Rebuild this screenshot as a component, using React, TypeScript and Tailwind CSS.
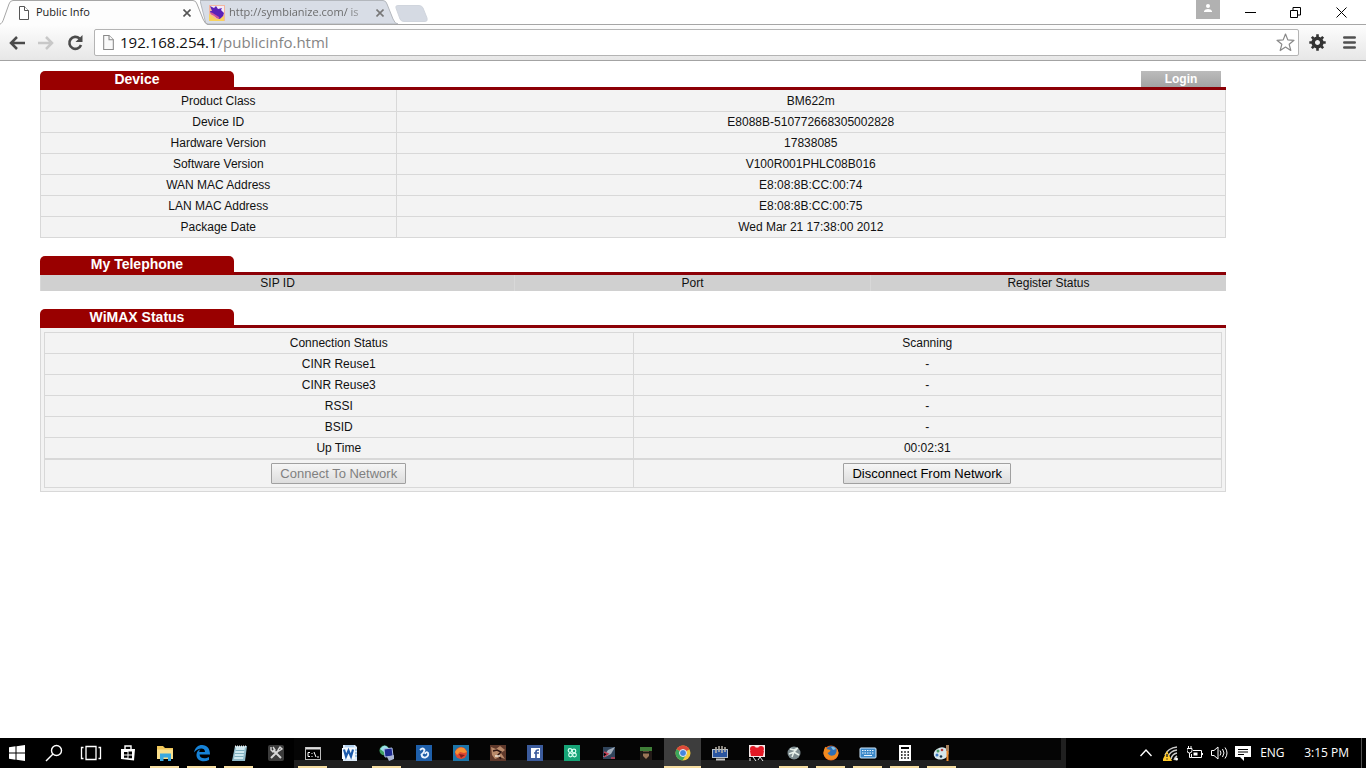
import type { ReactNode } from "react";

const uiFont = "font-['Open_Sans','Noto_Sans',sans-serif]";
const pageFont = "font-['Liberation_Sans',Arial,sans-serif]";

function PageIcon({ className, fill = "#fff", stroke = "#555" }: { className: string; fill?: string; stroke?: string }) {
  return (
    <svg className={className} viewBox="0 0 12 14" fill={fill} stroke={stroke} aria-hidden="true">
      <path d="M1.5.5h5l4 4v9h-9z" />
      <path d="M6.5.5v4h4" />
    </svg>
  );
}

function CloseIcon({ color }: { color: string }) {
  return (
    <svg className="h-2 w-2" viewBox="0 0 8 8" stroke={color} strokeWidth="1.6" aria-hidden="true">
      <path d="M.5.5l7 7M7.5.5l-7 7" />
    </svg>
  );
}

function TabStrip() {
  return (
    <header className="flex h-[25px] items-start justify-between border-b border-[#a6a6a6] bg-white">
      <div className={`flex ${uiFont} text-[11px]`} role="tablist" aria-label="Browser tabs">
        <div className="relative z-10 flex h-[25px] w-[200px] items-center pl-[18px]">
          <svg className="absolute top-0 left-0 h-[25px] w-[208px]" viewBox="0 0 208 25" aria-hidden="true">
            <path d="M-2 25C2 24 3 21 4 18L9 4Q10 .5 13 .5H193Q196 .5 197 4L203 19Q205 24 208 25Z" fill="#fdfdfd" />
            <path d="M-1 24.5C2 24 3 21 4 18L9 4Q10 .5 13 .5H193Q196 .5 197 4L203 19Q205 24 208 24.5" fill="none" stroke="#a6a6a6" />
          </svg>
          <PageIcon className="relative h-[14px] w-3" />
          <button role="tab" aria-selected="true" className="relative ml-[6px] w-[140px] text-left text-[#222]">Public Info</button>
          <button aria-label="Close Public Info" className="relative ml-[7px]"><CloseIcon color="#555" /></button>
        </div>
        <div className="relative flex h-[25px] w-[194px] items-center pl-[9px]">
          <svg className="absolute top-0 left-0 h-[24px] w-[198px]" viewBox="0 0 198 24" aria-hidden="true">
            <path d="M0 .5H183Q186 .5 187 4L193 19Q195 24 198 24H6Z" fill="#d8dde6" stroke="#b3b7bd" />
          </svg>
          <svg className="relative h-4 w-4" viewBox="0 0 16 16" aria-hidden="true">
            <rect width="16" height="16" fill="#f3b6a0" />
            <path d="M1 1h14v9l-3-4-3 1-5-3z" fill="#f3eaf6" />
            <path d="M1 1l4 2 2-2 2 3 4-1-1 2 3 3-1 3-3 3-3-1-3-3-3-1-1-3 2 0z" fill="#5a22b8" />
            <path d="M0 9l3 2 4 3 4 0 4-3v5H0z" fill="#f8d25e" />
            <path d="M2 8l8 5" stroke="#d2559a" strokeWidth="1.500" />
          </svg>
          <button role="tab" aria-selected="false" className="relative ml-1 w-[147px] bg-linear-to-r from-[#666] from-80% to-[#c7cbd1] to-95% bg-clip-text text-left whitespace-nowrap text-transparent">http://symbianize.com/ is</button>
          <button aria-label="Close symbianize.com" className="relative"><CloseIcon color="#777" /></button>
        </div>
        <button aria-label="New tab" className="mt-[5px] h-[17px] w-[34px]">
          <svg className="h-[17px] w-[34px]" viewBox="0 0 34 17" aria-hidden="true">
            <path d="M4 .5H25Q28 .5 29 3L33 13Q34 16.500 31 16.500H10Q7 16.500 6 14L2 3Q1 .5 4 .5Z" fill="#d5dae3" stroke="#d0d5dd" />
          </svg>
        </button>
      </div>
      <div className="flex h-6">
        <button aria-label="Profile" className="mr-[7px] flex h-[19px] w-6 justify-center bg-[#b1b1b1] pt-1">
          <svg className="h-2 w-2" viewBox="0 0 8 8" fill="#fff" aria-hidden="true">
            <circle cx="4" cy="2" r="2" />
            <path d="M0 8V7Q1 5 4 5T8 7V8Z" />
          </svg>
        </button>
        <button aria-label="Minimize" className="flex w-[46px] items-center justify-center">
          <svg className="h-[11px] w-[11px]" viewBox="0 0 11 11" stroke="#000"><path d="M0 5.500h11" /></svg>
        </button>
        <button aria-label="Restore" className="flex w-[45px] items-center justify-center">
          <svg className="h-[11px] w-[11px]" viewBox="0 0 11 11" stroke="#000" fill="none"><path d="M.5 3.500h7v7h-7zM3 3V.5h7.500V8H8" /></svg>
        </button>
        <button aria-label="Close window" className="mr-[2px] flex w-[46px] items-center justify-center">
          <svg className="h-[11px] w-[11px]" viewBox="0 0 11 11" stroke="#000"><path d="M.5.5l10 10M10.500.5l-10 10" /></svg>
        </button>
      </div>
    </header>
  );
}

function Toolbar() {
  return (
    <div className="flex h-9 items-center border-b border-[#a3a3a3] bg-linear-to-b from-[#fdfdfd] to-[#e7e7e7] pl-[9px]">
      <button aria-label="Back">
        <svg className="h-4 w-4" viewBox="0 0 16 16" fill="none" stroke="#4b4b4b" strokeWidth="2.500"><path d="M2 8h14M8 2L2 8l6 6" /></svg>
      </button>
      <button aria-label="Forward" disabled className="ml-[13px]">
        <svg className="h-4 w-4" viewBox="0 0 16 16" fill="none" stroke="#c8c8c8" strokeWidth="2.500"><path d="M0 8h14M8 2l6 6-6 6" /></svg>
      </button>
      <button aria-label="Reload" className="ml-[13px]">
        <svg className="h-4 w-4" viewBox="0 0 16 16" fill="none" aria-hidden="true">
          <path d="M12.500 3.500A6 6 0 1 0 14 10" stroke="#4b4b4b" strokeWidth="2.600" />
          <path d="M15.500 0v7H8.500z" fill="#4b4b4b" />
        </svg>
      </button>
      <form className="relative ml-[11px] flex h-[27px] min-w-0 flex-1 items-center rounded-[2px] border border-[#b4b4b4] bg-white pl-[7px]" onSubmit={(e) => e.preventDefault()}>
        <PageIcon className="h-[15px] w-[13px] shrink-0" fill="#fafafa" stroke="#8a8a8a" />
        <div className={`relative ml-[5px] min-w-0 flex-1 pb-[2px] text-[15px] leading-5 ${uiFont}`}>
          <div aria-hidden="true" className="text-[#858585]"><span className="text-[#111]">192.168.254.1</span>/publicinfo.html</div>
          <input aria-label="Address" defaultValue="192.168.254.1/publicinfo.html" className="absolute inset-0 w-full bg-transparent text-transparent outline-none" />
        </div>
        <button aria-label="Bookmark this page" className="mr-[3px]">
          <svg className="h-[19px] w-[19px]" viewBox="0 0 19 19" fill="#fff" stroke="#888" strokeWidth="1.200" strokeLinejoin="round">
            <path d="M9.500 1l2.300 5.900 6.200.4-4.800 4 1.600 6.200-5.300-3.400-5.300 3.400 1.600-6.200-4.800-4 6.200-.4z" />
          </svg>
        </button>
      </form>
      <button aria-label="Extension settings" className="ml-[10px]">
        <svg className="h-[17px] w-[17px]" viewBox="-8.500 -8.500 17 17" aria-hidden="true">
          <circle r="4.300" fill="none" stroke="#333" strokeWidth="3.600" />
          <path d="M0-8.200V-5M0 8.200V5M-8.200 0H-5M8.200 0H5M-5.700-5.700L-4-4M5.700 5.700L4 4M-5.700 5.700L-4 4M5.700-5.700L4-4" stroke="#333" strokeWidth="2.600" />
        </svg>
      </button>
      <button aria-label="Menu" className="mr-[10px] ml-[17px]">
        <svg className="h-[13px] w-[13px]" viewBox="0 0 13 13" stroke="#505050" strokeWidth="2.600" strokeLinecap="round"><path d="M1.300 1.500h10.400M1.300 6.500h10.400M1.300 11.500h10.400" /></svg>
      </button>
    </div>
  );
}

function SectionTitle({ children, action }: { children: ReactNode; action?: ReactNode }) {
  return (
    <div className="flex h-[19px] items-start justify-between border-b-[3px] border-[#8c0006]">
      <h2 className="h-[19px] w-[194px] rounded-t-[5px] bg-[#990000] text-center text-[14px] leading-[17px] font-bold text-white">{children}</h2>
      {action}
    </div>
  );
}

const deviceRows = [
  ["Product Class", "BM622m"],
  ["Device ID", "E8088B-510772668305002828"],
  ["Hardware Version", "17838085"],
  ["Software Version", "V100R001PHLC08B016"],
  ["WAN MAC Address", "E8:08:8B:CC:00:74"],
  ["LAN MAC Address", "E8:08:8B:CC:00:75"],
  ["Package Date", "Wed Mar 21 17:38:00 2012"],
];

const wimaxRows = [
  ["Connection Status", "Scanning"],
  ["CINR Reuse1", "-"],
  ["CINR Reuse3", "-"],
  ["RSSI", "-"],
  ["BSID", "-"],
  ["Up Time", "00:02:31"],
];

const cell = "border border-[#d8d8d8] p-0 text-center font-normal";
const formButton = "h-[21px] rounded-[1px] border border-[#a0a0a0] bg-linear-to-b from-[#f6f6f6] to-[#dddddd] px-2 text-[13px] leading-[19px]";

function PublicInfo() {
  return (
    <main className={`flex-1 bg-white pt-[10px] pr-[140px] pl-10 text-[12px] leading-4 text-[#111] ${pageFont}`}>
      <section>
        <SectionTitle
          action={<button className="mr-[5px] h-4 w-20 bg-linear-to-b from-[#bcbcbc] to-[#a3a3a3] text-[12px] leading-4 font-bold text-white">Login</button>}
        >
          Device
        </SectionTitle>
        <table className="w-full table-fixed border-collapse bg-[#f3f3f3]">
          <colgroup><col className="w-[30%]" /><col /></colgroup>
          <tbody className="[&>tr:first-child>*]:pt-px">
            {deviceRows.map(([name, value]) => (
              <tr key={name}>
                <th scope="row" className={`h-[21px] border-t-0 ${cell}`}>{name}</th>
                <td className={`h-[21px] border-t-0 ${cell}`}>{value}</td>
              </tr>
            ))}
          </tbody>
        </table>
      </section>

      <section className="mt-[18px]">
        <SectionTitle>My Telephone</SectionTitle>
        <table className="w-full table-fixed border-collapse bg-[#d0d0d0]">
          <colgroup><col className="w-[40%]" /><col className="w-[30%]" /><col className="w-[30%]" /></colgroup>
          <thead>
            <tr>
              {["SIP ID", "Port", "Register Status"].map((name) => (
                <th key={name} scope="col" className="h-4 border-l border-[#d8d8d8] p-0 text-center font-normal">{name}</th>
              ))}
            </tr>
          </thead>
        </table>
      </section>

      <section className="mt-[18px]">
        <SectionTitle>WiMAX Status</SectionTitle>
        <div className="border border-t-0 border-[#d8d8d8] bg-[#f3f3f3] px-[3px] pt-1 pb-[3px]">
          <table className="w-full table-fixed border-collapse">
            <tbody className="[&>tr:nth-child(6)>*]:h-[22px] [&>tr:nth-child(6)>*]:pt-px">
              {wimaxRows.map(([name, value]) => (
                <tr key={name}>
                  <th scope="row" className={`h-[21px] ${cell}`}>{name}</th>
                  <td className={`h-[21px] ${cell}`}>{value}</td>
                </tr>
              ))}
              <tr>
                <td className="h-7 border border-t-2 border-[#d8d8d8] p-0 text-center">
                  <button disabled className={`${formButton} text-[#808080]`}>Connect To Network</button>
                </td>
                <td className="h-7 border border-t-2 border-[#d8d8d8] p-0 text-center">
                  <button className={`${formButton} text-black`}>Disconnect From Network</button>
                </td>
              </tr>
            </tbody>
          </table>
        </div>
      </section>
    </main>
  );
}

type TaskApp = { name: string; open?: boolean; active?: boolean; art: ReactNode };

const systemApps: TaskApp[] = [
  { name: "Start", art: <path d="M0 2.300L6.500 1.300V7.500H0zM7.500 1.200L16 0v7.500H7.500zM0 8.500h6.500v6.200L0 13.700zM7.500 8.500H16V16l-8.500-1.200z" fill="#fff" /> },
  { name: "Search", art: <g fill="none" stroke="#fff" strokeWidth="1.400"><circle cx="10.500" cy="5.500" r="5" /><path d="M7 9l-7 7" /></g> },
  { name: "Task View", art: <g fill="none" stroke="#fff" strokeWidth="1.300"><path d="M3 1.500h10v13H3zM.5 2.500H-1.500v11H.5M15.500 2.500H17.500v11H15.500" /></g> },
  { name: "Store", art: <g><path d="M1 4h14l-1 11.500L1 14z" fill="#fff" /><path d="M5 4V1h6v3" fill="none" stroke="#fff" strokeWidth="1.400" /><path d="M4 7h3.500v2.500H4zM8.500 6.500h3.500v3H8.500zM4 10.500h3.500v2.300H4zM8.500 10.500h3.500v2.800H8.500z" fill="#000" /></g> },
  { name: "File Explorer", open: true, art: <g><path d="M0 1h6l2 2h8v11H0z" fill="#f0c75a" /><path d="M0 4.500h16V14H0z" fill="#fbe08c" /><path d="M3 16V8.500h11V16h-3v-3.500H6.500V16z" fill="#3ba9df" /></g> },
  { name: "Edge", open: true, art: <path d="M0 7.500C1 2.500 4 0 8.200 0 13 0 16 3.500 16 9.500H5.500c.3 4.500 6 4.500 9.500 2.500v3C9 18 2 15.500 2.500 9.500 2.700 6.500 4.500 5 6.500 4.200 5.500 5 5.300 6 5.300 7H11c0-5-7-4.500-11 .5z" fill="#1683d8" /> },
  { name: "Notepad", open: true, art: <g><path d="M4 1h12l-2 15H1z" fill="#8fb9c8" /><path d="M3 14l2-12h9l-2 12z" fill="#cfe9f0" /><path d="M4.500 5.500h9M4 8.500h9M3.500 11.500h9" stroke="#7fb0c0" /><path d="M4 1.500h11" stroke="#eee" strokeWidth="2" strokeDasharray="1 1" /></g> },
  { name: "Tools", art: <g><rect width="16" height="16" rx="2" fill="#3b3b3b" /><path d="M3 13l8-8M5 5l8 8" stroke="#d7d7d7" strokeWidth="2" /><path d="M3 2v3l2 2 2-2-2-3M10 5l2-3 2 2-3 2" fill="none" stroke="#d7d7d7" strokeWidth="1.400" /></g> },
];

const pinnedApps: TaskApp[] = [
  { name: "Command Prompt", open: true, art: <g><rect x=".5" y="2.500" width="15" height="12" fill="#000" stroke="#bbb" /><path d="M1 3.500h14" stroke="#ddd" strokeWidth="2" /><path d="M5 7.500H3v4h2M7 8v1M7 11v1M9 7l2 5M12 12h2" stroke="#fff" fill="none" /></g> },
  { name: "Word", art: <g><path d="M1 0h12l2 2v14H1z" fill="#dcebfa" /><path d="M3 1h9" stroke="#86b6e4" /><path d="M0 3h13v11H0z" fill="#f6fbff" /><path d="M2 4.500l2 7 2.500-6 2.500 6 2-7" stroke="#1d5bac" strokeWidth="2.200" fill="none" /><path d="M13 5h2M13 8h2M13 11h2" stroke="#639bd1" /></g> },
  { name: "Network", open: true, art: <g><circle cx="5.500" cy="5.500" r="5" fill="#3f9f62" /><path d="M1 4q5-7 9 0L5 7z" fill="#9be0ea" /><path d="M5 4l8-1 1 8-8 1z" fill="#1f2c92" stroke="#aebfe6" /><path d="M8 12l7-2v4l-5 2z" fill="#a9b4d2" /></g> },
  { name: "UC Browser", art: <g><rect width="16" height="16" fill="#1e5faa" /><path d="M4 5Q7 2 8.500 5 8 8 5.500 9.500 6 13 9.500 12.500 13 11 12 8 10 6 9 9" fill="none" stroke="#e8f2ff" strokeWidth="1.800" /></g> },
  { name: "Firebird", art: <g><rect width="16" height="16" fill="#1d75a9" /><circle cx="8" cy="8" r="6" fill="#df4932" /><path d="M2 7q3-6 9-4l3 4-3 1-4-1-3 3z" fill="#f79132" /><path d="M6 9l6 1-4 3z" fill="#871d1d" /></g> },
  { name: "Clash", art: <g><rect width="16" height="16" fill="#60392b" /><path d="M1 2l5 2 4-3 5 4-4 3 4 6-5-2-5 2-3-4z" fill="#b98a6b" /><path d="M3 6l4-1 4 2-3 3 3 4" fill="none" stroke="#2d1511" strokeWidth="1.500" /><path d="M5 11h5" stroke="#f2e4d4" strokeWidth="1.500" /></g> },
  { name: "Facebook", art: <g><rect width="16" height="16" fill="#3b5b9c" /><path d="M4 3h9v10H4z" fill="#fff" /><path d="M12 5h-1q-2 0-2 2v6M7 8h5" stroke="#3b5b9c" strokeWidth="1.700" fill="none" /></g> },
  { name: "Green Browser", art: <g><rect width="16" height="16" fill="#16a477" /><g fill="none" stroke="#d8fff1" strokeWidth="1.200"><circle cx="6" cy="5.500" r="1.800" /><circle cx="10" cy="6" r="1.800" /><circle cx="6.500" cy="10" r="1.800" /><circle cx="10.500" cy="10" r="1.800" /></g></g> },
  { name: "Jet Game", art: <g><rect x="2" y="2" width="12" height="12" fill="#30445b" /><path d="M2 12l5-7 7-3-4 7-6 3z" fill="#a3afbc" /><path d="M3 7l4 2-4 3M10 13h4" stroke="#bf4055" strokeWidth="1.500" /></g> },
  { name: "Soldier Game", art: <g><rect x="2" y="2" width="12" height="13" fill="#231b18" /><path d="M2 2h12v4H2z" fill="#3f7f38" /><path d="M5 6h6v5l-3 3-3-3z" fill="#9c7557" /><path d="M4 7.500h8" stroke="#1b1814" strokeWidth="2" /></g> },
  { name: "Chrome", open: true, active: true, art: <g><circle cx="8" cy="8" r="7.500" fill="#f1c83a" /><path d="M8 8L1.500 4.300A7.500 7.500 0 0 1 14.500 4.300z" fill="#db493a" /><path d="M8 8L1.500 4.300A7.500 7.500 0 0 0 7.500 15.500L11.500 9z" fill="#3ca65b" /><circle cx="8" cy="8" r="3.500" fill="#4385dd" stroke="#eee" /></g> },
  { name: "Monitor Tool", art: <g><rect x=".5" y="4.500" width="15" height="8" fill="#2a55a0" stroke="#b6c1cc" /><path d="M4 14.500h9" stroke="#c2c2c2" strokeWidth="2" /><path d="M4 8V2M7 7V1M10 8V1M13 7V2" stroke="#bab5aa" strokeWidth="1.500" /></g> },
  { name: "Red Network", art: <g><path d="M0 0h16v12H0z" fill="#f7e9e9" /><g fill="#e31925"><circle cx="4" cy="4" r="3" /><circle cx="12" cy="4" r="3" /><circle cx="8" cy="6" r="3.500" /><path d="M1 6h14l-1 5H2z" /></g><path d="M1 13v3M4 12l3 4M9 15l2-3 3 4" stroke="#eee" fill="none" /></g> },
  { name: "Globe", open: true, art: <g><circle cx="8" cy="8" r="6.500" fill="#7d8c90" /><path d="M4 4l4 1 4-2M3 9l5-2 5 3M6 12l2-5 3-3" stroke="#e8f1eb" strokeWidth="1.500" fill="none" /></g> },
  { name: "Firefox", open: true, art: <g><circle cx="8" cy="8" r="7.500" fill="#e0601c" /><circle cx="8.500" cy="6.500" r="5.500" fill="#2f6fb4" /><path d="M8 2q3-1 5 2l-3 1z" fill="#7fc0e6" /><path d="M1 5q1-4 2.500-3l0 2 4 1-1 2-2 1q2 4 7 2 3-3 2-7 4 5 0 9.500-4 3.500-9 1.500Q-1 11 1 5z" fill="#f08a20" /></g> },
  { name: "On-Screen Keyboard", open: true, art: <g><rect y="3" width="16" height="10" rx="1" fill="#3c89c9" stroke="#d1eaff" /><path d="M2 5.500h12M2 8h12" stroke="#e9f5ff" strokeDasharray="1.500 1" /><path d="M4 10.500h8" stroke="#e9f5ff" /></g> },
  { name: "Calculator", open: true, art: <g><path d="M2 0h12v16H2z" fill="#fff" /><path d="M4 2h8v2H4z" /><path d="M4 7h8M4 10h8M4 13h8" stroke="#000" strokeWidth="1.600" strokeDasharray="1.600 1.600" /></g> },
  { name: "Paint", open: true, art: <g><ellipse cx="7" cy="8.500" rx="7.500" ry="6" fill="#d6e6eb" transform="rotate(-15 7 8)" /><circle cx="4" cy="6" r="1.500" fill="#4a9b66" /><circle cx="8" cy="5" r="1.300" fill="#b83939" /><circle cx="3" cy="10" r="1.500" fill="#3b79c5" /><circle cx="7" cy="11.500" r="1.300" fill="#1c3548" /><path d="M13.500 0v6" stroke="#a9825c" strokeWidth="3" /><path d="M13.500 6v10" stroke="#ee8a2c" strokeWidth="2" /></g> },
];

function TaskButton({ app }: { app: TaskApp }) {
  return (
    <button aria-label={app.name} title={app.name} className={`relative flex h-full w-[37px] items-center justify-center ${app.active ? "bg-[#3d3d3d]" : ""}`}>
      <svg className="h-4 w-4 overflow-visible" viewBox="0 0 16 16">{app.art}</svg>
      {app.open && <span className={`absolute bottom-0 h-[2px] bg-[#f6dda0] ${app.active ? "inset-x-0" : "inset-x-1"}`} />}
    </button>
  );
}

function Taskbar() {
  return (
    <footer className={`flex h-[30px] justify-between bg-black text-white ${uiFont}`}>
      <nav aria-label="Taskbar" className="-ml-[2px] flex">
        <div className="flex">{systemApps.map((app) => <TaskButton key={app.name} app={app} />)}</div>
        <div className="flex w-[772px] bg-[#050505] shadow-[inset_-5px_-8px_0_#202020]">{pinnedApps.map((app) => <TaskButton key={app.name} app={app} />)}</div>
      </nav>
      <div className="flex items-center text-[12px]">
        <button aria-label="Show hidden icons" className="mr-[11px]">
          <svg className="h-3 w-3" viewBox="0 0 12 12" fill="none" stroke="#fff" strokeWidth="1.400"><path d="M.5 9L6 3l5.500 6" /></svg>
        </button>
        <button aria-label="Network" className="mr-2">
          <svg className="h-4 w-4" viewBox="0 0 16 16" fill="none" stroke="#ccc">
            <path d="M2 10Q5 3 14 2M5 12q2-6 9-7M8 14q1-5 6-6M11 15q1-3 3-4" strokeWidth="1.400" />
            <circle cx="13.500" cy="14" r="1.500" fill="#fff" stroke="none" />
            <path d="M4 6l5 10H-1z" fill="#ffc928" stroke="none" /><path d="M4 9v3M4 13.500v1" stroke="#222" strokeWidth="1.400" />
          </svg>
        </button>
        <button aria-label="Battery" className="mr-2">
          <svg className="h-4 w-4" viewBox="0 0 16 16" fill="none" stroke="#fff">
            <path d="M6 5.500h8.500v7H4.500V9M15.500 8v2M0 3.500h5v2Q5 8 2.500 8T0 5.500zM1.500 1v2M4 1v2M2.500 8v4.500h2" />
            <path d="M6.500 7.500h4v3h-4z" fill="#fff" stroke="none" />
          </svg>
        </button>
        <button aria-label="Volume" className="mr-[7px]">
          <svg className="h-4 w-[17px]" viewBox="0 0 17 16" fill="none" stroke="#fff">
            <path d="M.5 5.500H3l4-3.500v12l-4-3.500H.5zM9 5.500q2 2.500 0 5M11.500 4q3 4 0 8M14 2.500q4 5.500 0 11" />
          </svg>
        </button>
        <button aria-label="Notifications" className="mr-[9px]">
          <svg className="h-4 w-4" viewBox="0 0 16 16"><path d="M0 1h16v11H9v4l-4-4H0z" fill="#fff" /><path d="M3 4.500h10M3 7h10M3 9.500h6" stroke="#000" /></svg>
        </button>
        <button className="mr-5 w-6">ENG</button>
        <time className="mr-3 whitespace-nowrap">3:15 PM</time>
        <button aria-label="Show desktop" className="h-full w-[5px] border-l border-[#505050]" />
      </div>
    </footer>
  );
}

export default function App() {
  return (
    <div className="flex min-h-screen flex-col bg-white">
      <TabStrip />
      <Toolbar />
      <PublicInfo />
      <Taskbar />
    </div>
  );
}
